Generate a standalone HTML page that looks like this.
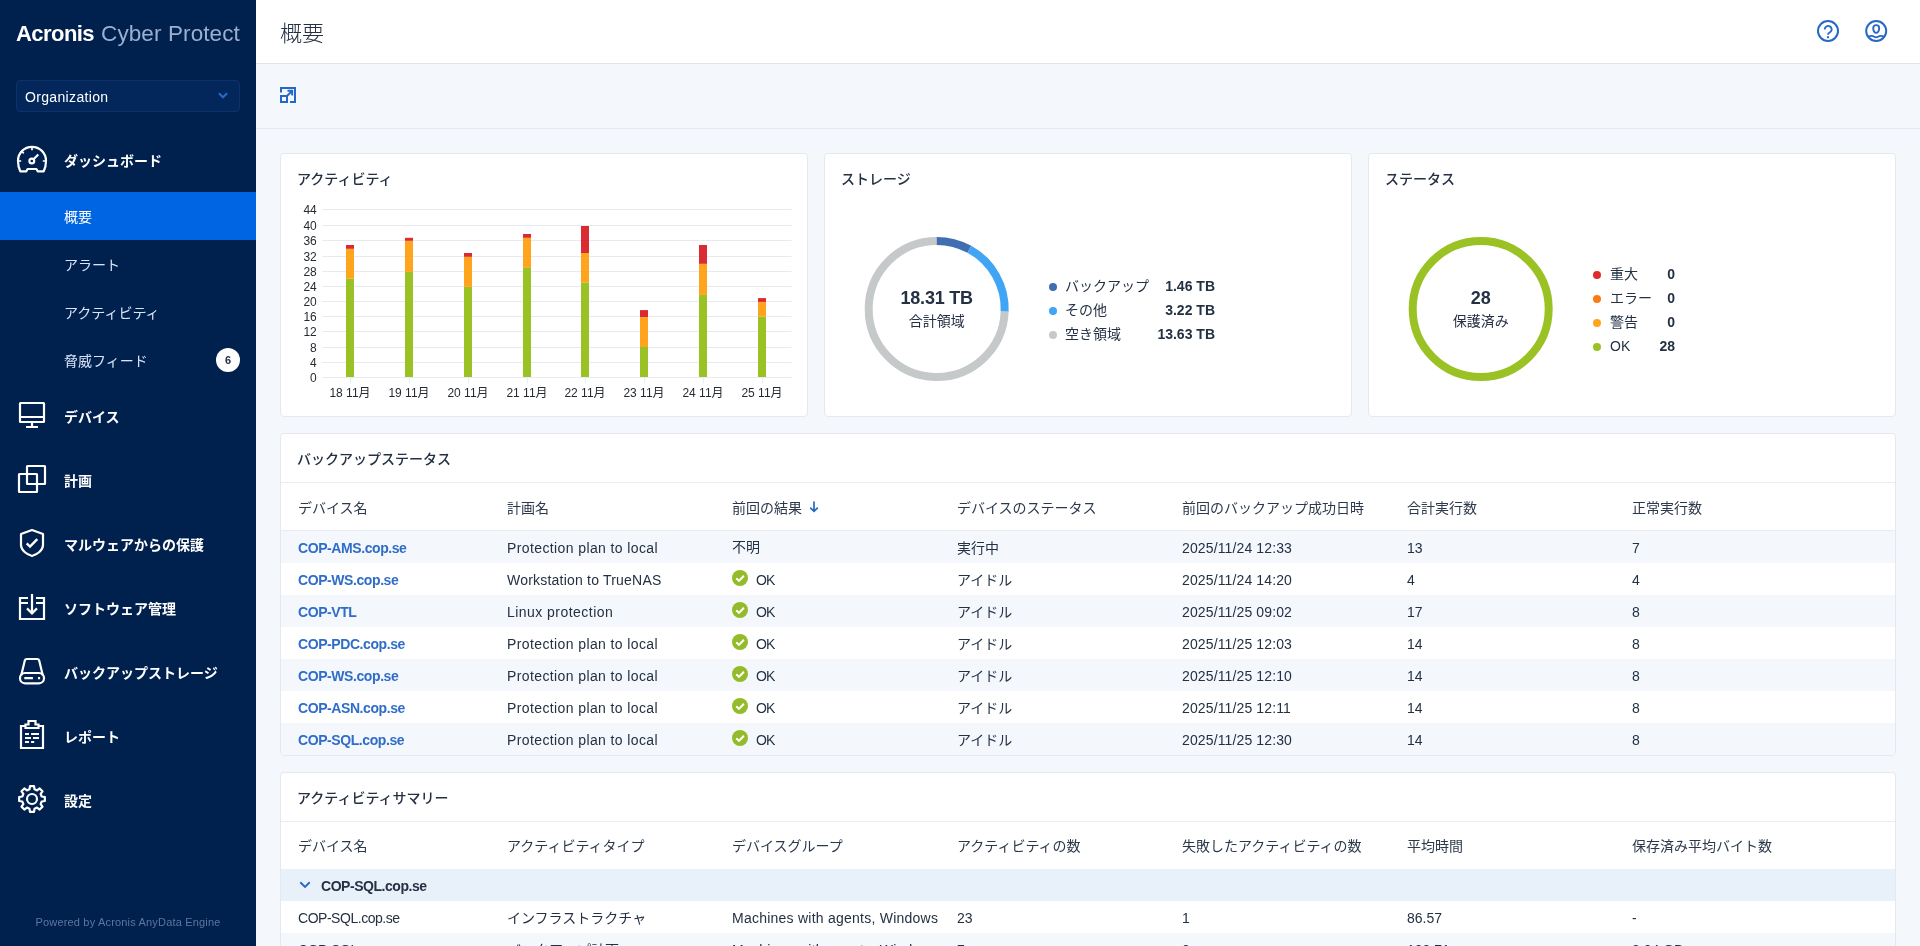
<!DOCTYPE html>
<html lang="ja">
<head>
<meta charset="utf-8">
<title>概要 - Acronis Cyber Protect</title>
<style>
*{box-sizing:border-box;margin:0;padding:0}
html,body{width:1920px;height:946px;overflow:hidden;background:#f4f7fc}
body{font-family:"Liberation Sans","Noto Sans CJK JP",sans-serif;font-size:14px;color:#243143;position:relative;-webkit-font-smoothing:antialiased}
#app{position:absolute;left:0;top:0;width:1920px;height:946px;overflow:hidden;will-change:transform}
.abs{position:absolute}
.t{position:absolute;white-space:nowrap;line-height:20px;height:20px}
#side{position:absolute;left:0;top:0;width:256px;height:946px;background:#00204d;color:#fff}
#side .main{position:absolute;left:64px;font-weight:700;font-size:14px;line-height:20px;white-space:nowrap;color:#fff}
#side .sub{position:absolute;left:64px;font-size:14px;line-height:20px;white-space:nowrap;color:#d9e6fa}
#side svg.ic{position:absolute;left:16px;width:32px;height:32px;fill:none;stroke:#fff;stroke-width:2.2}
#hdr{position:absolute;left:256px;top:0;width:1664px;height:64px;background:#fff;border-bottom:1px solid #dfe3ec}
#tool{position:absolute;left:256px;top:64px;width:1664px;height:65px;background:#f4f7fc;border-bottom:1px solid #e3e8f1}
.card{position:absolute;background:#fff;border:1px solid #e4e8ef;border-radius:4px;overflow:hidden}
.ctitle{position:absolute;left:16px;font-size:14px;font-weight:500;line-height:20px;white-space:nowrap;color:#243143}
.hd{position:absolute;font-size:14px;line-height:20px;white-space:nowrap;color:#2c394b}
.c{position:absolute;font-size:14px;line-height:20px;white-space:nowrap;color:#243143}
.lk{color:#2f6dc7;font-weight:700;letter-spacing:-0.42px}
.row{position:absolute;left:0;width:1614px;height:32px}
.st{background:#f4f7fc}
.b{font-weight:700}
</style>
</head>
<body>
<div id="app">
<div id="side">
<div class="abs" id="logo" style="left:16px;top:20px;height:28px;line-height:28px;white-space:nowrap;font-size:22px"><span id="lg1" style="font-weight:700;color:#fff;letter-spacing:-0.55px">Acronis</span><span id="lg2" style="color:#9bafd2;margin-left:7px;letter-spacing:0.1px;font-size:22.5px">Cyber Protect</span></div>
<div class="abs" style="left:16px;top:80px;width:224px;height:32px;border-radius:4px;background:#03275b;border:1px solid #0d326a"></div>
<div class="abs" id="org" style="left:25px;top:87px;font-size:14px;line-height:20px;color:#fff;letter-spacing:0.34px">Organization</div>
<svg class="abs" style="left:217px;top:90px" width="12" height="10" viewBox="0 0 12 10"><path d="M1.900 3.300 L6 7.300 L10.100 3.300" fill="none" stroke="#2b69d0" stroke-width="1.9"/></svg>
<svg class="ic" style="top:144px" viewBox="0 0 32 32"><path d="M4.300 27.300 H10.300 L11.600 25 H20.400 L21.700 27.300 H27.700 C29.200 24.300 30 20.800 30 16.800 A14 14 0 0 0 2 16.800 C2 20.800 2.800 24.300 4.300 27.300 Z" stroke-linejoin="round"/><circle cx="15.800" cy="17" r="2.400"/><path d="M17.500 15.300 L22.300 10.500"/><path d="M16 3.800 V6.200 M3 17 H5.200 M26.800 17 H29 M6.300 7.900 L7.800 9.400" stroke-width="1.700"/></svg>
<div class="main" style="top:151px">ダッシュボード</div>
<div class="abs" style="left:0;top:192px;width:256px;height:48px;background:#0065e3"></div>
<div class="sub" style="top:207px;color:#fff">概要</div>
<div class="sub" style="top:255px">アラート</div>
<div class="sub" style="top:303px">アクティビティ</div>
<div class="sub" style="top:351px">脅威フィード</div>
<div class="abs" style="left:216px;top:348px;width:24px;height:24px;border-radius:12px;background:#fff;color:#243143;font-size:11px;font-weight:700;line-height:24px;text-align:center">6</div>
<svg class="ic" style="top:400px" viewBox="0 0 32 32"><rect x="4" y="3" width="24" height="19" rx="0.5"/><path d="M4 17 H28 M16 22 V27 M10 27 H22"/></svg>
<div class="main" style="top:407px">デバイス</div>
<svg class="ic" style="top:464px" viewBox="0 0 32 32"><rect x="11" y="2" width="18" height="18" rx="0.5"/><rect x="3" y="10" width="18" height="18" rx="0.5"/></svg>
<div class="main" style="top:471px">計画</div>
<svg class="ic" style="top:528px" viewBox="0 0 32 32"><path d="M16 2 L27 6 V17 C27 22.500 21 26.500 16 28 C11 26.500 5 22.500 5 17 V6 Z" stroke-linejoin="round"/><path d="M10.700 15.400 L14 18.600 L21.300 11.100" stroke-width="2.400"/></svg>
<div class="main" style="top:535px">マルウェアからの保護</div>
<svg class="ic" style="top:592px" viewBox="0 0 32 32"><path d="M12 6 H4 V27 H28 V6 H20 M4 11 H12 M20 11 H28 M16 2 V21 M11 16.400 L16 21.400 L21 16.400"/></svg>
<div class="main" style="top:599px">ソフトウェア管理</div>
<svg class="ic" style="top:656px" viewBox="0 0 32 32"><rect x="4" y="17" width="24" height="10.300" rx="5"/><path d="M5.200 19.500 L8.800 4.600 Q9.200 3 10.800 3 H21.200 Q22.800 3 23.200 4.600 L26.800 19.500"/><path d="M8.300 22.100 H16.900 M22 22.100 H24.100"/></svg>
<div class="main" style="top:663px">バックアップストレージ</div>
<svg class="ic" style="top:720px" viewBox="0 0 32 32"><path d="M9.500 6 H5 V28 H27 V6 H22.500"/><path d="M9.500 8 V4.500 H12.500 V1 H19.500 V4.500 H22.500 V8 Z"/><path d="M9 14 H13 M15.100 14 H23 M9 18 H15 M17 18 H23 M9 22 H13 M15.100 22 H18.200"/></svg>
<div class="main" style="top:727px">レポート</div>
<svg class="ic" style="top:784px" viewBox="0 0 32 32"><path d="M13.50 5.32 L13.97 2.16 L18.03 2.16 L18.50 5.32 L21.08 6.38 L23.64 4.48 L26.52 7.36 L24.62 9.92 L25.68 12.50 L28.84 12.97 L28.84 17.03 L25.68 17.50 L24.62 20.08 L26.52 22.64 L23.64 25.52 L21.08 23.62 L18.50 24.68 L18.03 27.84 L13.97 27.84 L13.50 24.68 L10.92 23.62 L8.36 25.52 L5.48 22.64 L7.38 20.08 L6.32 17.50 L3.16 17.03 L3.16 12.97 L6.32 12.50 L7.38 9.92 L5.48 7.36 L8.36 4.48 L10.92 6.38 Z" stroke-linejoin="round"/><circle cx="16" cy="15" r="5"/></svg>
<div class="main" style="top:791px">設定</div>
<div class="abs" id="pw" style="left:0;top:913px;width:256px;text-align:center;font-size:11px;line-height:18px;color:#5d769f;letter-spacing:0.18px">Powered by Acronis AnyData Engine</div>
</div>
<div id="hdr"></div>
<div class="abs" id="ptitle" style="left:280px;top:18px;font-size:22px;line-height:32px;font-weight:300;color:#243143;white-space:nowrap">概要</div>
<svg class="abs" style="left:1816px;top:19px" width="24" height="24" viewBox="0 0 24 24" fill="none" stroke="#2668c5" stroke-width="2"><circle cx="12" cy="12" r="10"/><path d="M8.700 10.500 A3.500 3.400 0 1 1 14.100 13.200 C12.800 14 12.100 14.400 12.100 15.300 V15.700" stroke-width="1.9"/><rect x="11" y="17.200" width="2" height="2" fill="#2668c5" stroke="none"/></svg>
<svg class="abs" style="left:1864px;top:19px" width="24" height="24" viewBox="0 0 24 24" fill="none" stroke="#2668c5" stroke-width="2"><circle cx="12.200" cy="12" r="10"/><path d="M12.200 6.100 C14.400 6.100 15.200 7.700 15.200 9.300 C15.200 11.600 13.800 13.900 12.200 13.900 C10.600 13.900 9.200 11.600 9.200 9.300 C9.200 7.700 10 6.100 12.200 6.100 Z" stroke-width="1.9"/><path d="M3.900 18 C6.200 16.800 8.700 16.700 10.300 17.700 C11.500 18.500 12.900 18.500 14.100 17.700 C15.700 16.700 18.200 16.800 20.500 18" stroke-width="1.700"/></svg>
<div id="tool"></div>
<svg class="abs" style="left:280px;top:87px" width="16" height="16" viewBox="0 0 16 16" fill="none" stroke="#2668c5" stroke-width="2"><path d="M1 5.500 V1 H15 V15 H10"/><rect x="1" y="9" width="6" height="6"/><path d="M7 9 L12 4 M7.500 3.800 H12.200 V8.500" stroke-width="1.900"/></svg>
<div class="card" style="left:280px;top:153px;width:528px;height:264px">
<div class="ctitle" style="top:15px">アクティビティ</div>
<svg class="abs" style="left:0;top:0" width="526" height="262" viewBox="0 0 526 262" font-family="Liberation Sans, Noto Sans CJK JP, sans-serif" font-size="12" fill="#262b33">
<path d="M41.0 223.5 H510.5" stroke="#e8eaee" stroke-width="1"/>
<text x="35.8" y="227.7" text-anchor="end">0</text>
<path d="M41.0 208.5 H510.5" stroke="#e8eaee" stroke-width="1"/>
<text x="35.8" y="212.7" text-anchor="end">4</text>
<path d="M41.0 193.5 H510.5" stroke="#e8eaee" stroke-width="1"/>
<text x="35.8" y="197.7" text-anchor="end">8</text>
<path d="M41.0 177.5 H510.5" stroke="#e8eaee" stroke-width="1"/>
<text x="35.8" y="181.7" text-anchor="end">12</text>
<path d="M41.0 162.5 H510.5" stroke="#e8eaee" stroke-width="1"/>
<text x="35.8" y="166.7" text-anchor="end">16</text>
<path d="M41.0 147.5 H510.5" stroke="#e8eaee" stroke-width="1"/>
<text x="35.8" y="151.7" text-anchor="end">20</text>
<path d="M41.0 132.5 H510.5" stroke="#e8eaee" stroke-width="1"/>
<text x="35.8" y="136.7" text-anchor="end">24</text>
<path d="M41.0 117.5 H510.5" stroke="#e8eaee" stroke-width="1"/>
<text x="35.8" y="121.7" text-anchor="end">28</text>
<path d="M41.0 102.5 H510.5" stroke="#e8eaee" stroke-width="1"/>
<text x="35.8" y="106.7" text-anchor="end">32</text>
<path d="M41.0 86.5 H510.5" stroke="#e8eaee" stroke-width="1"/>
<text x="35.8" y="90.7" text-anchor="end">36</text>
<path d="M41.0 71.5 H510.5" stroke="#e8eaee" stroke-width="1"/>
<text x="35.8" y="75.7" text-anchor="end">40</text>
<path d="M41.0 55.5 H510.5" stroke="#e8eaee" stroke-width="1"/>
<text x="35.8" y="59.7" text-anchor="end">44</text>
<path d="M69.5 223.0 V229.5" stroke="#e6ecf6" stroke-width="1"/>
<rect x="65" y="124.7" width="8" height="98.3" fill="#9bc225"/>
<rect x="65" y="94.8" width="8" height="29.9" fill="#ffa41c"/>
<rect x="65" y="91.0" width="8" height="3.8" fill="#d92b31"/>
<text x="69.0" y="243.0" text-anchor="middle">18 11月</text>
<path d="M128.5 223.0 V229.5" stroke="#e6ecf6" stroke-width="1"/>
<rect x="124" y="117.9" width="8" height="105.1" fill="#9bc225"/>
<rect x="124" y="86.8" width="8" height="31.1" fill="#ffa41c"/>
<rect x="124" y="83.8" width="8" height="3.0" fill="#d92b31"/>
<text x="128.0" y="243.0" text-anchor="middle">19 11月</text>
<path d="M187.5 223.0 V229.5" stroke="#e6ecf6" stroke-width="1"/>
<rect x="183" y="132.9" width="8" height="90.1" fill="#9bc225"/>
<rect x="183" y="102.8" width="8" height="30.1" fill="#ffa41c"/>
<rect x="183" y="99.0" width="8" height="3.8" fill="#d92b31"/>
<text x="187.0" y="243.0" text-anchor="middle">20 11月</text>
<path d="M246.5 223.0 V229.5" stroke="#e6ecf6" stroke-width="1"/>
<rect x="242" y="113.9" width="8" height="109.1" fill="#9bc225"/>
<rect x="242" y="83.8" width="8" height="30.1" fill="#ffa41c"/>
<rect x="242" y="80.0" width="8" height="3.8" fill="#d92b31"/>
<text x="246.0" y="243.0" text-anchor="middle">21 11月</text>
<path d="M304.5 223.0 V229.5" stroke="#e6ecf6" stroke-width="1"/>
<rect x="300" y="128.5" width="8" height="94.5" fill="#9bc225"/>
<rect x="300" y="99.0" width="8" height="29.5" fill="#ffa41c"/>
<rect x="300" y="72.0" width="8" height="27.0" fill="#d92b31"/>
<text x="304.0" y="243.0" text-anchor="middle">22 11月</text>
<path d="M363.5 223.0 V229.5" stroke="#e6ecf6" stroke-width="1"/>
<rect x="359" y="193.0" width="8" height="30.0" fill="#9bc225"/>
<rect x="359" y="163.0" width="8" height="30.0" fill="#ffa41c"/>
<rect x="359" y="156.1" width="8" height="6.9" fill="#d92b31"/>
<text x="363.0" y="243.0" text-anchor="middle">23 11月</text>
<path d="M422.5 223.0 V229.5" stroke="#e6ecf6" stroke-width="1"/>
<rect x="418" y="140.9" width="8" height="82.1" fill="#9bc225"/>
<rect x="418" y="109.8" width="8" height="31.1" fill="#ffa41c"/>
<rect x="418" y="91.0" width="8" height="18.8" fill="#d92b31"/>
<text x="422.0" y="243.0" text-anchor="middle">24 11月</text>
<path d="M481.5 223.0 V229.5" stroke="#e6ecf6" stroke-width="1"/>
<rect x="477" y="162.5" width="8" height="60.5" fill="#9bc225"/>
<rect x="477" y="147.9" width="8" height="14.6" fill="#ffa41c"/>
<rect x="477" y="144.1" width="8" height="3.8" fill="#d92b31"/>
<text x="481.0" y="243.0" text-anchor="middle">25 11月</text>
</svg>
</div>
<div class="card" style="left:824px;top:153px;width:528px;height:264px">
<div class="ctitle" style="top:15px">ストレージ</div>
<svg class="abs" style="left:0;top:0" width="526" height="262" viewBox="0 0 526 262">
<path d="M179.66 157.39 A68.00 68.00 0 1 1 111.70 87.00" fill="none" stroke="#c6c9ca" stroke-width="8"/>
<path d="M111.70 87.00 A68.00 68.00 0 0 1 144.36 95.36" fill="none" stroke="#406fb1" stroke-width="8"/>
<path d="M144.36 95.36 A68.00 68.00 0 0 1 179.66 157.39" fill="none" stroke="#41a5f5" stroke-width="8"/>
<circle cx="228.0" cy="133.0" r="4" fill="#406fb1"/>
<circle cx="228.0" cy="157.0" r="4" fill="#41a5f5"/>
<circle cx="228.0" cy="181.0" r="4" fill="#c6c9ca"/>
</svg>
<div class="abs b" id="d1a" style="left:39.7px;top:132px;width:144px;text-align:center;font-size:18px;line-height:24px;font-weight:700;letter-spacing:-0.2px">18.31 TB</div>
<div class="abs" id="d1b" style="left:39.7px;top:157px;width:144px;text-align:center;font-size:14px;line-height:20px">合計領域</div>
<div class="c" style="left:240px;top:122px">バックアップ</div>
<div class="c b" style="left:310px;top:122px;width:80px;text-align:right">1.46 TB</div>
<div class="c" style="left:240px;top:146px">その他</div>
<div class="c b" style="left:310px;top:146px;width:80px;text-align:right">3.22 TB</div>
<div class="c" style="left:240px;top:170px">空き領域</div>
<div class="c b" style="left:310px;top:170px;width:80px;text-align:right">13.63 TB</div>
</div>
<div class="card" style="left:1368px;top:153px;width:528px;height:264px">
<div class="ctitle" style="top:15px">ステータス</div>
<svg class="abs" style="left:0;top:0" width="526" height="262" viewBox="0 0 526 262">
<circle cx="111.7" cy="155.0" r="68" fill="none" stroke="#9bc225" stroke-width="8"/>
<circle cx="228.0" cy="121.0" r="4" fill="#de2c2c"/>
<circle cx="228.0" cy="145.0" r="4" fill="#fa7b14"/>
<circle cx="228.0" cy="169.0" r="4" fill="#ffa41c"/>
<circle cx="228.0" cy="193.0" r="4" fill="#9bc225"/>
</svg>
<div class="abs b" id="d2a" style="left:39.7px;top:132px;width:144px;text-align:center;font-size:18px;line-height:24px;font-weight:700">28</div>
<div class="abs" id="d2b" style="left:39.7px;top:157px;width:144px;text-align:center;font-size:14px;line-height:20px">保護済み</div>
<div class="c" style="left:241px;top:110px">重大</div>
<div class="c b" style="left:266px;top:110px;width:40px;text-align:right">0</div>
<div class="c" style="left:241px;top:134px">エラー</div>
<div class="c b" style="left:266px;top:134px;width:40px;text-align:right">0</div>
<div class="c" style="left:241px;top:158px">警告</div>
<div class="c b" style="left:266px;top:158px;width:40px;text-align:right">0</div>
<div class="c" style="left:241px;top:182px">OK</div>
<div class="c b" style="left:266px;top:182px;width:40px;text-align:right">28</div>
</div>
<div class="card" style="left:280px;top:433px;width:1616px;height:323px">
<div class="ctitle" style="top:15px">バックアップステータス</div>
<div class="abs" style="left:0;top:48px;width:1614px;height:1px;background:#e9ecf2"></div>
<div class="hd" style="left:17px;top:64px">デバイス名</div>
<div class="hd" style="left:226px;top:64px">計画名</div>
<div class="hd" style="left:451px;top:64px">前回の結果</div>
<div class="hd" style="left:676px;top:64px">デバイスのステータス</div>
<div class="hd" style="left:901px;top:64px">前回のバックアップ成功日時</div>
<div class="hd" style="left:1126px;top:64px">合計実行数</div>
<div class="hd" style="left:1351px;top:64px">正常実行数</div>
<svg class="abs" style="left:528px;top:67px" width="10" height="12" viewBox="0 0 10 12" fill="none" stroke="#2668c5" stroke-width="1.700"><path d="M5 0.400 V10 M1.200 6.600 L5 10.400 L8.800 6.600"/></svg>
<div class="abs" style="left:0;top:96px;width:1614px;height:1px;background:#e9ecf2"></div>
<div class="row st" style="top:97px">
<div class="c lk" style="left:17px;top:7px;">COP-AMS.cop.se</div>
<div class="c" style="left:226px;top:7px;letter-spacing:0.39px;">Protection plan to local</div>
<div class="c" style="left:451px;top:6px">不明</div>
<div class="c" style="left:676px;top:7px;">実行中</div>
<div class="c" style="left:901px;top:7px;letter-spacing:0.13px;">2025/11/24 12:33</div>
<div class="c" style="left:1126px;top:7px;">13</div>
<div class="c" style="left:1351px;top:7px;">7</div>
</div>
<div class="row" style="top:129px">
<div class="c lk" style="left:17px;top:7px;">COP-WS.cop.se</div>
<div class="c" style="left:226px;top:7px;letter-spacing:0.21px;">Workstation to TrueNAS</div>
<svg class="abs" style="left:451px;top:7px" width="16" height="16" viewBox="0 0 16 16"><circle cx="8" cy="8" r="8" fill="#93bb2a"/><path d="M4.300 8.300 L7 10.900 L11.900 5.700" fill="none" stroke="#fff" stroke-width="2"/></svg>
<div class="c" style="left:475px;top:7px;letter-spacing:-0.8px;">OK</div>
<div class="c" style="left:676px;top:7px;">アイドル</div>
<div class="c" style="left:901px;top:7px;letter-spacing:0.13px;">2025/11/24 14:20</div>
<div class="c" style="left:1126px;top:7px;">4</div>
<div class="c" style="left:1351px;top:7px;">4</div>
</div>
<div class="row st" style="top:161px">
<div class="c lk" style="left:17px;top:7px;">COP-VTL</div>
<div class="c" style="left:226px;top:7px;letter-spacing:0.46px;">Linux protection</div>
<svg class="abs" style="left:451px;top:7px" width="16" height="16" viewBox="0 0 16 16"><circle cx="8" cy="8" r="8" fill="#93bb2a"/><path d="M4.300 8.300 L7 10.900 L11.900 5.700" fill="none" stroke="#fff" stroke-width="2"/></svg>
<div class="c" style="left:475px;top:7px;letter-spacing:-0.8px;">OK</div>
<div class="c" style="left:676px;top:7px;">アイドル</div>
<div class="c" style="left:901px;top:7px;letter-spacing:0.13px;">2025/11/25 09:02</div>
<div class="c" style="left:1126px;top:7px;">17</div>
<div class="c" style="left:1351px;top:7px;">8</div>
</div>
<div class="row" style="top:193px">
<div class="c lk" style="left:17px;top:7px;">COP-PDC.cop.se</div>
<div class="c" style="left:226px;top:7px;letter-spacing:0.39px;">Protection plan to local</div>
<svg class="abs" style="left:451px;top:7px" width="16" height="16" viewBox="0 0 16 16"><circle cx="8" cy="8" r="8" fill="#93bb2a"/><path d="M4.300 8.300 L7 10.900 L11.900 5.700" fill="none" stroke="#fff" stroke-width="2"/></svg>
<div class="c" style="left:475px;top:7px;letter-spacing:-0.8px;">OK</div>
<div class="c" style="left:676px;top:7px;">アイドル</div>
<div class="c" style="left:901px;top:7px;letter-spacing:0.13px;">2025/11/25 12:03</div>
<div class="c" style="left:1126px;top:7px;">14</div>
<div class="c" style="left:1351px;top:7px;">8</div>
</div>
<div class="row st" style="top:225px">
<div class="c lk" style="left:17px;top:7px;">COP-WS.cop.se</div>
<div class="c" style="left:226px;top:7px;letter-spacing:0.39px;">Protection plan to local</div>
<svg class="abs" style="left:451px;top:7px" width="16" height="16" viewBox="0 0 16 16"><circle cx="8" cy="8" r="8" fill="#93bb2a"/><path d="M4.300 8.300 L7 10.900 L11.900 5.700" fill="none" stroke="#fff" stroke-width="2"/></svg>
<div class="c" style="left:475px;top:7px;letter-spacing:-0.8px;">OK</div>
<div class="c" style="left:676px;top:7px;">アイドル</div>
<div class="c" style="left:901px;top:7px;letter-spacing:0.13px;">2025/11/25 12:10</div>
<div class="c" style="left:1126px;top:7px;">14</div>
<div class="c" style="left:1351px;top:7px;">8</div>
</div>
<div class="row" style="top:257px">
<div class="c lk" style="left:17px;top:7px;">COP-ASN.cop.se</div>
<div class="c" style="left:226px;top:7px;letter-spacing:0.39px;">Protection plan to local</div>
<svg class="abs" style="left:451px;top:7px" width="16" height="16" viewBox="0 0 16 16"><circle cx="8" cy="8" r="8" fill="#93bb2a"/><path d="M4.300 8.300 L7 10.900 L11.900 5.700" fill="none" stroke="#fff" stroke-width="2"/></svg>
<div class="c" style="left:475px;top:7px;letter-spacing:-0.8px;">OK</div>
<div class="c" style="left:676px;top:7px;">アイドル</div>
<div class="c" style="left:901px;top:7px;letter-spacing:0.13px;">2025/11/25 12:11</div>
<div class="c" style="left:1126px;top:7px;">14</div>
<div class="c" style="left:1351px;top:7px;">8</div>
</div>
<div class="row st" style="top:289px">
<div class="c lk" style="left:17px;top:7px;">COP-SQL.cop.se</div>
<div class="c" style="left:226px;top:7px;letter-spacing:0.39px;">Protection plan to local</div>
<svg class="abs" style="left:451px;top:7px" width="16" height="16" viewBox="0 0 16 16"><circle cx="8" cy="8" r="8" fill="#93bb2a"/><path d="M4.300 8.300 L7 10.900 L11.900 5.700" fill="none" stroke="#fff" stroke-width="2"/></svg>
<div class="c" style="left:475px;top:7px;letter-spacing:-0.8px;">OK</div>
<div class="c" style="left:676px;top:7px;">アイドル</div>
<div class="c" style="left:901px;top:7px;letter-spacing:0.13px;">2025/11/25 12:30</div>
<div class="c" style="left:1126px;top:7px;">14</div>
<div class="c" style="left:1351px;top:7px;">8</div>
</div>
</div>
<div class="card" style="left:280px;top:772px;width:1616px;height:220px;border-bottom-left-radius:0;border-bottom-right-radius:0">
<div class="ctitle" style="top:15px">アクティビティサマリー</div>
<div class="abs" style="left:0;top:48px;width:1614px;height:1px;background:#e9ecf2"></div>
<div class="hd" style="left:17px;top:63px">デバイス名</div>
<div class="hd" style="left:226px;top:63px">アクティビティタイプ</div>
<div class="hd" style="left:451px;top:63px">デバイスグループ</div>
<div class="hd" style="left:676px;top:63px">アクティビティの数</div>
<div class="hd" style="left:901px;top:63px">失敗したアクティビティの数</div>
<div class="hd" style="left:1126px;top:63px">平均時間</div>
<div class="hd" style="left:1351px;top:63px">保存済み平均バイト数</div>
<div class="row" style="top:96px;background:#e8f0fa">
<svg class="abs" style="left:18px;top:11px" width="12" height="10" viewBox="0 0 12 10"><path d="M1.300 2.300 L6 6.900 L10.700 2.300" fill="none" stroke="#2668c5" stroke-width="1.900"/></svg>
<div class="c b" style="left:40px;top:7px;letter-spacing:-0.46px;">COP-SQL.cop.se</div>
</div>
<div class="row" style="top:128px">
<div class="c" style="left:17px;top:7px;letter-spacing:-0.47px;">COP-SQL.cop.se</div>
<div class="c" style="left:226px;top:7px;">インフラストラクチャ</div>
<div class="c" style="left:451px;top:7px;letter-spacing:0.24px;">Machines with agents, Windows</div>
<div class="c" style="left:676px;top:7px;">23</div>
<div class="c" style="left:901px;top:7px;">1</div>
<div class="c" style="left:1126px;top:7px;">86.57</div>
<div class="c" style="left:1351px;top:7px;">-</div>
</div>
<div class="row st" style="top:160px">
<div class="c" style="left:17px;top:7px;letter-spacing:-0.47px;">COP-SQL.cop.se</div>
<div class="c" style="left:226px;top:7px;">バックアップ計画</div>
<div class="c" style="left:451px;top:7px;letter-spacing:0.24px;">Machines with agents, Windows</div>
<div class="c" style="left:676px;top:7px;">7</div>
<div class="c" style="left:901px;top:7px;">0</div>
<div class="c" style="left:1126px;top:7px;">108.71</div>
<div class="c" style="left:1351px;top:7px;">3.04 GB</div>
</div>
</div>
</div>
</body>
</html>
